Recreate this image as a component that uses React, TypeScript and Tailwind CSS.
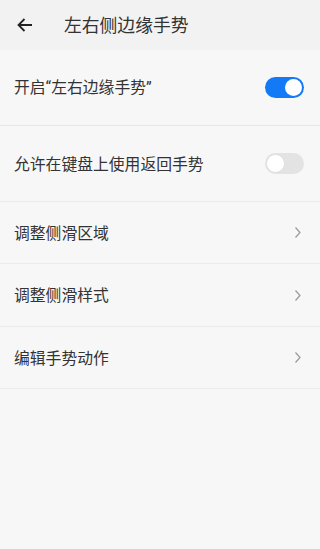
import React from "react";

const font = { fontFamily: '"Noto Sans CJK SC", "Noto Sans", sans-serif' };
const latin = { fontFamily: 'Roboto, "Noto Sans", sans-serif' };

function Chevron() {
  return (
    <svg width="8" height="13" viewBox="0 0 8 13" className="mr-[2px]">
      <path d="M1.5 1.5 L6 6.5 L1.5 11.5" fill="none" stroke="#9a9a9a" strokeWidth="1.2" />
    </svg>
  );
}

function Toggle({ on }: { on: boolean }) {
  return on ? (
    <div className="w-[39px] h-[21px] rounded-full bg-[#1479f5] flex items-center justify-end pr-[2px]">
      <div className="w-[17px] h-[17px] rounded-full bg-white" />
    </div>
  ) : (
    <div className="w-[39px] h-[21px] rounded-full bg-[#e3e3e3] flex items-center pl-[1px]">
      <div className="w-[19px] h-[19px] rounded-full bg-white border border-[#e0e0e0]" />
    </div>
  );
}

export default function App() {
  const rows = [
    { t: "调整侧滑区域", h: "h-[62px]" },
    { t: "调整侧滑样式", h: "h-[63px]" },
    { t: "编辑手势动作", h: "h-[62px]" },
  ];
  return (
    <div className="w-[320px] h-[549px] bg-[#f7f7f7] text-[#333]" style={font}>
      <div className="h-[50px] bg-[#f2f2f2] flex items-center">
        <svg width="16" height="14" viewBox="0 0 16 14" className="ml-[17px]">
          <path d="M15 7 H1.5 M7.5 1 L1.5 7 L7.5 13" fill="none" stroke="#222" strokeWidth="1.8" />
        </svg>
        <div className="ml-[31px] text-[17.8px] leading-none text-[#333]">左右侧边缘手势</div>
      </div>
      <div className="h-[76px] flex items-center justify-between pl-[14px] pr-[16px] border-b border-[#e6e6e6]">
        <span className="text-[15.8px]">
          开启<span style={latin}>“</span>左右边缘手势<span style={latin}>”</span>
        </span>
        <Toggle on />
      </div>
      <div className="h-[76px] flex items-center justify-between pl-[14px] pr-[16px] border-b border-[#ebebeb]">
        <span className="text-[15.8px]">允许在键盘上使用返回手势</span>
        <Toggle on={false} />
      </div>
      {rows.map((r) => (
        <div key={r.t} className={`${r.h} flex items-center justify-between pl-[14px] pr-[16px] border-b border-[#ebebeb]`}>
          <span className="text-[15.8px]">{r.t}</span>
          <Chevron />
        </div>
      ))}
    </div>
  );
}
